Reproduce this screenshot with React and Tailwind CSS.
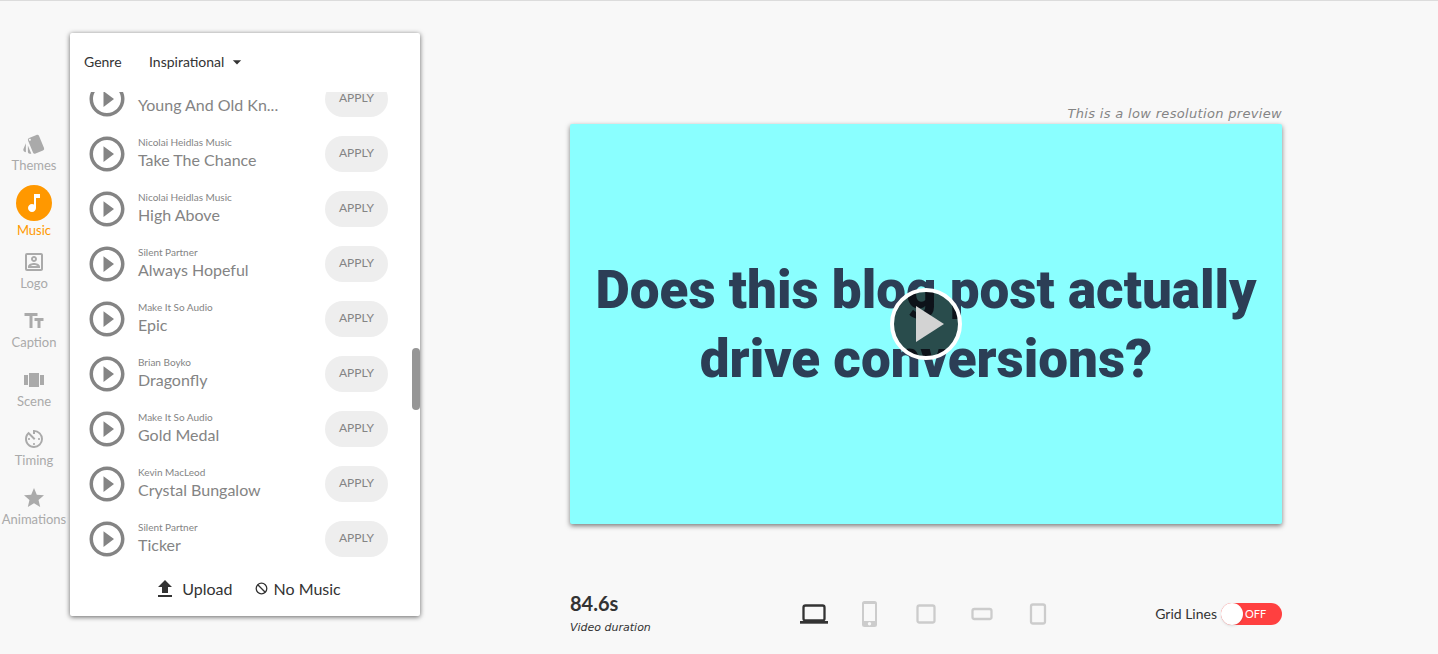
import { useState } from 'react';
import {
  MdStyle,
  MdMusicNote,
  MdOutlinePortrait,
  MdTextFields,
  MdViewCarousel,
  MdAvTimer,
  MdStar,
  MdPlayCircleOutline,
  MdFileUpload,
  MdArrowDropDown,
} from 'react-icons/md';

const NAV_ITEMS = [
  { label: 'Themes', Icon: MdStyle },
  { label: 'Music', Icon: MdMusicNote },
  { label: 'Logo', Icon: MdOutlinePortrait },
  { label: 'Caption', Icon: MdTextFields },
  { label: 'Scene', Icon: MdViewCarousel },
  { label: 'Timing', Icon: MdAvTimer },
  { label: 'Animations', Icon: MdStar },
];

const TRACKS = [
  { artist: 'Nicolai Heidlas Music', title: 'Young And Old Kn...' },
  { artist: 'Nicolai Heidlas Music', title: 'Take The Chance' },
  { artist: 'Nicolai Heidlas Music', title: 'High Above' },
  { artist: 'Silent Partner', title: 'Always Hopeful' },
  { artist: 'Make It So Audio', title: 'Epic' },
  { artist: 'Brian Boyko', title: 'Dragonfly' },
  { artist: 'Make It So Audio', title: 'Gold Medal' },
  { artist: 'Kevin MacLeod', title: 'Crystal Bungalow' },
  { artist: 'Silent Partner', title: 'Ticker' },
];

const DEVICES = [
  {
    name: 'Laptop',
    shape: (
      <>
        <rect x="3.500" y="5.500" width="21" height="15" rx="2" fill="none" stroke="currentColor" strokeWidth="2.300" />
        <path d="M0 21h28v2.700H0z" />
      </>
    ),
  },
  {
    name: 'Phone',
    shape: (
      <path
        fillRule="evenodd"
        d="M8.500 1h10a2.500 2.500 0 0 1 2.500 2.500v21a2.500 2.500 0 0 1-2.500 2.500h-10a2.500 2.500 0 0 1-2.500-2.500v-21A2.500 2.500 0 0 1 8.500 1zM8 4v17h11V4zM13.500 22a1.700 1.700 0 1 0 0 3.400a1.700 1.700 0 0 0 0-3.400z"
      />
    ),
  },
  {
    name: 'Square',
    shape: <rect x="5.500" y="5.500" width="17" height="17" rx="2" fill="none" stroke="currentColor" strokeWidth="2.300" />,
  },
  {
    name: 'Wide',
    shape: <rect x="4.500" y="9" width="19" height="10" rx="2" fill="none" stroke="currentColor" strokeWidth="2.300" />,
  },
  {
    name: 'Tablet',
    shape: <rect x="7" y="4.500" width="14" height="19" rx="2" fill="none" stroke="currentColor" strokeWidth="2.300" />,
  },
];

const SideNav = ({ active, onSelect }) => (
  <nav className="flex w-[68px] shrink-0 flex-col items-center gap-[17px] pt-[131px]">
    {NAV_ITEMS.map(({ label, Icon }) => {
      const isActive = label === active;
      return (
        <button
          key={label}
          onClick={() => onSelect(label)}
          className={`flex flex-col items-center text-[13px] leading-[18px] ${isActive ? '-my-[6px] text-[#ff9800]' : 'text-[#aaaaaa]'}`}
        >
          {isActive ? (
            <span className="flex h-9 w-9 items-center justify-center rounded-full bg-[#ff9800] text-white">
              <Icon size={24} />
            </span>
          ) : (
            <Icon size={24} />
          )}
          {label}
        </button>
      );
    })}
  </nav>
);

const TrackRow = ({ artist, title }) => (
  <li className="flex h-[55px] shrink-0 items-center pl-4 pr-8 text-[#848484]">
    <button aria-label={`Play ${title}`}>
      <MdPlayCircleOutline size={42} />
    </button>
    <div className="ml-[10px] flex-1">
      <p className="text-[10px] leading-[14px]">{artist}</p>
      <p className="pb-[2px] text-[16px] leading-[22px]">{title}</p>
    </div>
    <button className="h-9 w-[63px] rounded-full bg-[#eeeeee] pb-[2px] text-[12px]">APPLY</button>
  </li>
);

const MusicPanel = () => (
  <section className="relative flex w-[350px] shrink-0 flex-col rounded-xs bg-white shadow-[0_1px_5px_rgba(0,0,0,0.6)]">
    <div className="flex h-[59px] items-center px-[14px] pb-[2px] text-[14px] text-[#333333]">
      <label htmlFor="genre" className="w-[65px]">
        Genre
      </label>
      <div className="flex items-center">
        <select id="genre" className="appearance-none bg-transparent">
          <option>Inspirational</option>
        </select>
        <MdArrowDropDown size={20} className="ml-[2px]" />
      </div>
    </div>
    <ul className="flex h-[474px] flex-col justify-end overflow-hidden">
      {TRACKS.map((track) => (
        <TrackRow key={track.title} {...track} />
      ))}
    </ul>
    <div className="absolute right-0 top-[315px] h-[62px] w-2 rounded-full bg-[#969696]" />
    <div className="flex h-[50px] items-center justify-center gap-[22px] pb-[5px] pl-1 text-[16px] text-[#333333]">
      <button className="flex items-center gap-[5px]">
        <MdFileUpload size={24} />
        Upload
      </button>
      <button className="flex items-center gap-[6px]">
        <svg width="13" height="13" viewBox="0 0 13 13" fill="none" stroke="currentColor" strokeWidth="1.300">
          <circle cx="6.500" cy="6.500" r="5.300" />
          <path d="M2.800 2.800l7.400 7.400" />
        </svg>
        No Music
      </button>
    </div>
  </section>
);

const Preview = () => (
  <div className="relative flex aspect-[712/400] w-full items-center justify-center rounded-xs bg-[#8affff] shadow-[0_2px_5px_rgba(0,0,0,0.5)]">
    <h1 className="pt-[2px] text-center font-['Roboto',sans-serif] text-[53px] font-black leading-[69px] text-[#2c3e56]">
      Does this blog post actually
      <br />
      drive conversions?
    </h1>
    <button
      aria-label="Play video"
      className="absolute inset-0 m-auto flex h-[72px] w-[72px] items-center justify-center rounded-full border-4 border-white bg-black/70"
    >
      <svg width="28" height="36" viewBox="0 0 28 36" className="ml-2">
        <path d="M0 0l28 18L0 36z" fill="#d3d3d3" />
      </svg>
    </button>
  </div>
);

const App = () => {
  const [tab, setTab] = useState('Music');
  const [device, setDevice] = useState('Laptop');
  const [gridLines, setGridLines] = useState(false);

  return (
    <div className="flex min-h-screen items-start border-t border-[#dcdcdc] bg-[#f8f8f8] font-['Lato',sans-serif]">
      <SideNav active={tab} onSelect={setTab} />
      <div className="flex shrink-0 pl-[2px] pt-8">
        <MusicPanel />
      </div>

      <main className="flex-1 pl-[150px] pr-[156px] pt-[102px]">
        <p className="text-right font-['DejaVu_Sans',sans-serif] text-[13px] italic leading-[21px] tracking-wide text-[#848484]">
          This is a low resolution preview
        </p>
        <Preview />

        <div className="flex items-center justify-between pt-[66px] text-[#333333]">
          <div className="flex-1">
            <p className="pb-[2px] text-[20px] font-bold leading-[26px]">84.6s</p>
            <p className="font-['DejaVu_Sans',sans-serif] text-[11px] italic leading-5">Video duration</p>
          </div>
          <div className="flex gap-7">
            {DEVICES.map(({ name, shape }) => (
              <button
                key={name}
                aria-label={name}
                onClick={() => setDevice(name)}
                className={name === device ? 'text-[#333333]' : 'text-[#cccccc]'}
              >
                <svg width="28" height="28" viewBox="0 0 28 28" fill="currentColor">
                  {shape}
                </svg>
              </button>
            ))}
          </div>
          <div className="flex flex-1 items-center justify-end gap-1">
            <span id="grid-label" className="pb-[2px] text-[14px]">
              Grid Lines
            </span>
            <button
              role="switch"
              aria-checked={gridLines}
              aria-labelledby="grid-label"
              onClick={() => setGridLines(!gridLines)}
              className="flex h-[22px] w-[61px] items-center gap-[2px] rounded-full bg-[#ff4040] text-[11px] text-white"
            >
              <span className="h-[22px] w-[22px] rounded-full bg-white shadow-sm" />
              {gridLines ? 'ON' : 'OFF'}
            </button>
          </div>
        </div>
      </main>
    </div>
  );
};

export default App;
